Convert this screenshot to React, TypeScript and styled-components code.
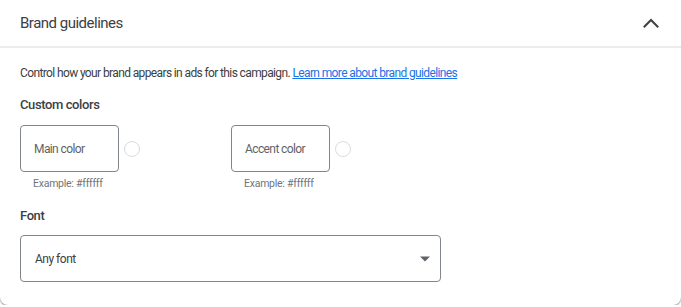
import React from "react";
import styled, { createGlobalStyle } from "styled-components";

const Global = createGlobalStyle`
  html, body { margin: 0; padding: 0; background: #ffffff; }
  body { font-family: Roboto, "Noto Sans", Arial, sans-serif; color: #3c4043; }
`;

const Card = styled.section`
  width: 681px;
  height: 305px;
  box-sizing: border-box;
  background: #fff;
  border-radius: 0 0 8px 8px;
  box-shadow: 0 1px 2px rgba(60, 64, 67, 0.45), 0 1px 1px rgba(60, 64, 67, 0.2);
  display: flex;
  flex-direction: column;
`;

const Header = styled.header`
  height: 48px;
  box-sizing: border-box;
  border-bottom: 2px solid #ececec;
  display: flex;
  align-items: center;
  justify-content: space-between;
  padding: 0 22px 0 20px;
`;

const Title = styled.h2`
  margin: 0;
  font-size: 15px;
  font-weight: 400;
  color: #3c4043;
  letter-spacing: -0.5px;
`;

const Body = styled.div`
  padding: 17px 20px 0 20px;
  display: flex;
  flex-direction: column;
`;

const Description = styled.p`
  margin: 0;
  font-size: 12px;
  line-height: 16px;
  letter-spacing: -0.62px;
  color: #3c4043;
  a {
    color: #1a73e8;
    text-decoration: underline;
  }
`;

const SectionLabel = styled.h3<{ $top: number }>`
  margin: ${(p) => p.$top}px 0 0 0;
  font-size: 13px;
  font-weight: 500;
  line-height: 16px;
  letter-spacing: -0.4px;
  color: #3c4043;
`;

const ColorRow = styled.div`
  display: flex;
  margin-top: 12px;
`;

const ColorField = styled.div`
  width: 211px;
  display: flex;
  flex-direction: column;
`;

const FieldLine = styled.div`
  display: flex;
  align-items: center;
  gap: 5px;
`;

const ColorInput = styled.div`
  width: 99px;
  height: 47px;
  box-sizing: border-box;
  border: 1px solid #80868b;
  border-radius: 4px;
  display: flex;
  align-items: center;
  padding-left: 13px;
  font-size: 12px;
  letter-spacing: -0.6px;
  color: #5f6368;
`;

const Swatch = styled.div`
  width: 16px;
  height: 16px;
  box-sizing: border-box;
  border-radius: 50%;
  border: 1px solid #dadce0;
  background: #fff;
`;

const Hint = styled.div`
  margin: 5px 0 0 13px;
  font-size: 10.5px;
  line-height: 14px;
  letter-spacing: -0.25px;
  color: #70757a;
`;

const Select = styled.div`
  margin-top: 11px;
  width: 421px;
  height: 47px;
  box-sizing: border-box;
  border: 1px solid #80868b;
  border-radius: 4px;
  display: flex;
  align-items: center;
  justify-content: space-between;
  padding: 0 10px 0 14px;
  font-size: 12px;
  letter-spacing: -0.5px;
  color: #3c4043;
`;

const Chevron = () => (
  <svg width="16" height="10" viewBox="0 0 16 10" fill="none">
    <path d="M1.5 8.5L8 2l6.5 6.5" stroke="#3c4043" strokeWidth="2" strokeLinecap="square" />
  </svg>
);

const Caret = () => (
  <svg width="10" height="6" viewBox="0 0 10 5">
    <path d="M0 0h10L5 5z" fill="#5f6368" />
  </svg>
);

export default function App() {
  return (
    <>
      <Global />
      <Card>
        <Header>
          <Title>Brand guidelines</Title>
          <Chevron />
        </Header>
        <Body>
          <Description>
            Control how your brand appears in ads for this campaign.{" "}
            <a href="#">Learn more about brand guidelines</a>
          </Description>
          <SectionLabel $top={16}>Custom colors</SectionLabel>
          <ColorRow>
            {["Main color", "Accent color"].map((label) => (
              <ColorField key={label}>
                <FieldLine>
                  <ColorInput>{label}</ColorInput>
                  <Swatch />
                </FieldLine>
                <Hint>Example: #ffffff</Hint>
              </ColorField>
            ))}
          </ColorRow>
          <SectionLabel $top={17}>Font</SectionLabel>
          <Select>
            <span>Any font</span>
            <Caret />
          </Select>
        </Body>
      </Card>
    </>
  );
}
